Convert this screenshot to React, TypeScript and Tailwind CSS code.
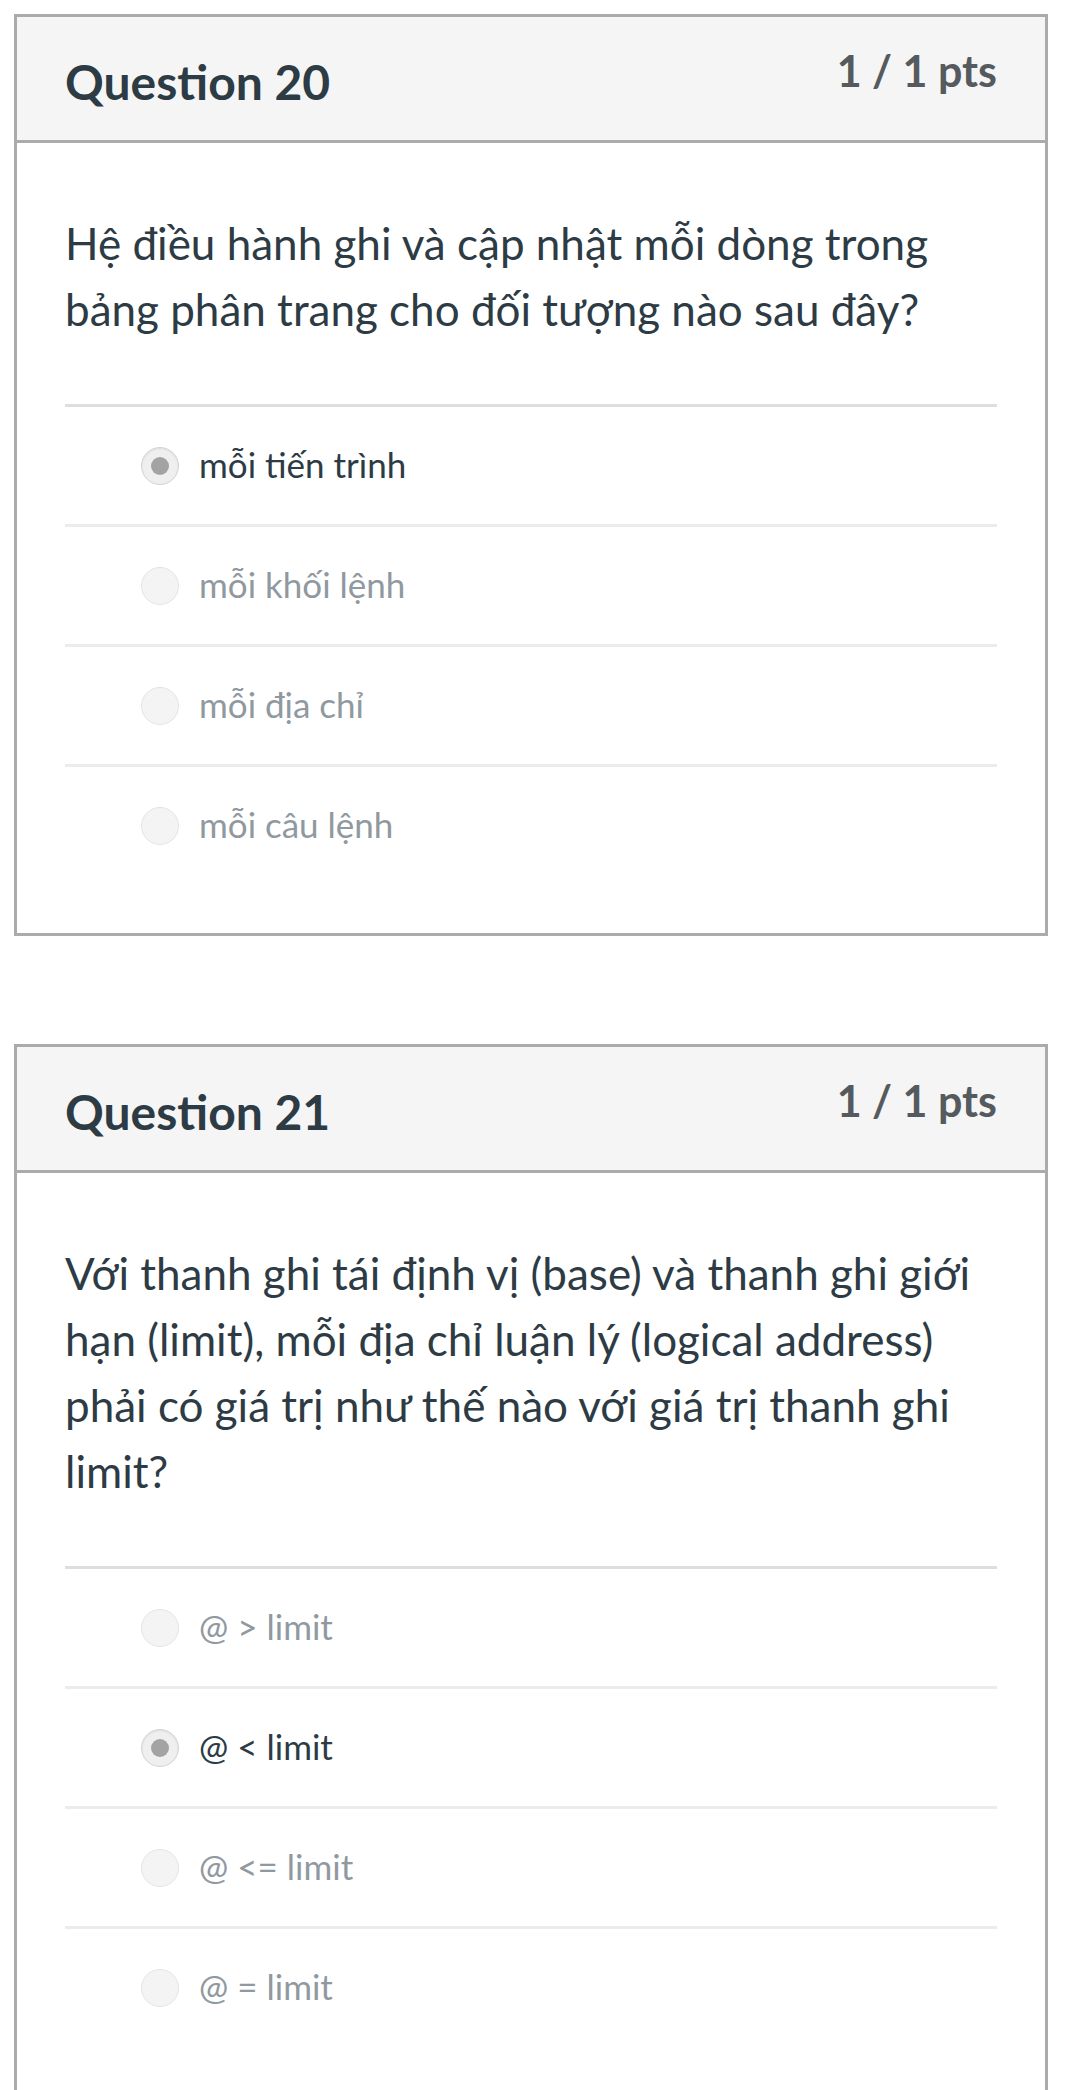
import React from 'react';

type Question = {
    number: number;
    points: string;
    text: string;
    answers: string[];
    selected: number;
};

const questions: Question[] = [
    {
        number: 20,
        points: '1 / 1 pts',
        text: 'Hệ điều hành ghi và cập nhật mỗi dòng trong bảng phân trang cho đối tượng nào sau đây?',
        answers: ['mỗi tiến trình', 'mỗi khối lệnh', 'mỗi địa chỉ', 'mỗi câu lệnh'],
        selected: 0,
    },
    {
        number: 21,
        points: '1 / 1 pts',
        text: 'Với thanh ghi tái định vị (base) và thanh ghi giới hạn (limit), mỗi địa chỉ luận lý (logical address) phải có giá trị như thế nào với giá trị thanh ghi limit?',
        answers: ['@ > limit', '@ < limit', '@ <= limit', '@ = limit'],
        selected: 1,
    },
];

const Radio = ({ checked }: { checked: boolean }) => (
    <span
        className={
            checked
                ? 'w-[38px] h-[38px] rounded-full bg-[#efefef] border border-[#d4d4d4] shadow-[inset_0_1px_2px_rgba(0,0,0,0.08)] flex items-center justify-center shrink-0'
                : 'w-[38px] h-[38px] rounded-full bg-[#f4f4f4] border border-[#e4e4e4] shrink-0'
        }
    >
        {checked && <span className="w-[18px] h-[18px] rounded-full bg-[#a3a3a3]" />}
    </span>
);

const QuestionCard = ({ q }: { q: Question }) => (
    <section className="ml-[14px] mr-[32px] border-[3px] border-[#ababab] bg-white">
        {/* Header */}
        <div className="h-[126px] bg-[#f5f5f5] border-b-[3px] border-[#ababab] px-[48px] flex items-start justify-between">
            <h2 className="mt-[36px] text-[48px] leading-[1.2] font-bold text-[#2d3b45]">Question {q.number}</h2>
            <div className="mt-[28px] text-[43px] leading-[1.2] font-bold text-[#555a5e]">{q.points}</div>
        </div>

        {/* Body */}
        <div className="px-[48px] pt-[67px] pb-[49px]">
            <p className="text-[44px] leading-[66px] text-[#2d3b45]">{q.text}</p>
            <ul className="mt-[62px]">
                {q.answers.map((answer, i) => (
                    <li
                        key={answer}
                        className={`h-[120px] flex items-center gap-[20px] pl-[76px] border-t-[3px] ${i === 0 ? 'border-[#dedede]' : 'border-[#ececec]'}`}
                    >
                        <Radio checked={i === q.selected} />
                        <span className={`text-[35px] leading-[1.2] -mt-[3px] ${i === q.selected ? 'text-[#2d3b45]' : 'text-[#8f999f]'}`}>{answer}</span>
                    </li>
                ))}
            </ul>
        </div>
    </section>
);

export default function App() {
    return (
        <div className="min-h-screen bg-white pt-[14px] flex flex-col gap-[108px]" style={{ fontFamily: 'Lato, "Noto Sans", sans-serif' }}>
            {questions.map((q) => (
                <QuestionCard key={q.number} q={q} />
            ))}
        </div>
    );
}
